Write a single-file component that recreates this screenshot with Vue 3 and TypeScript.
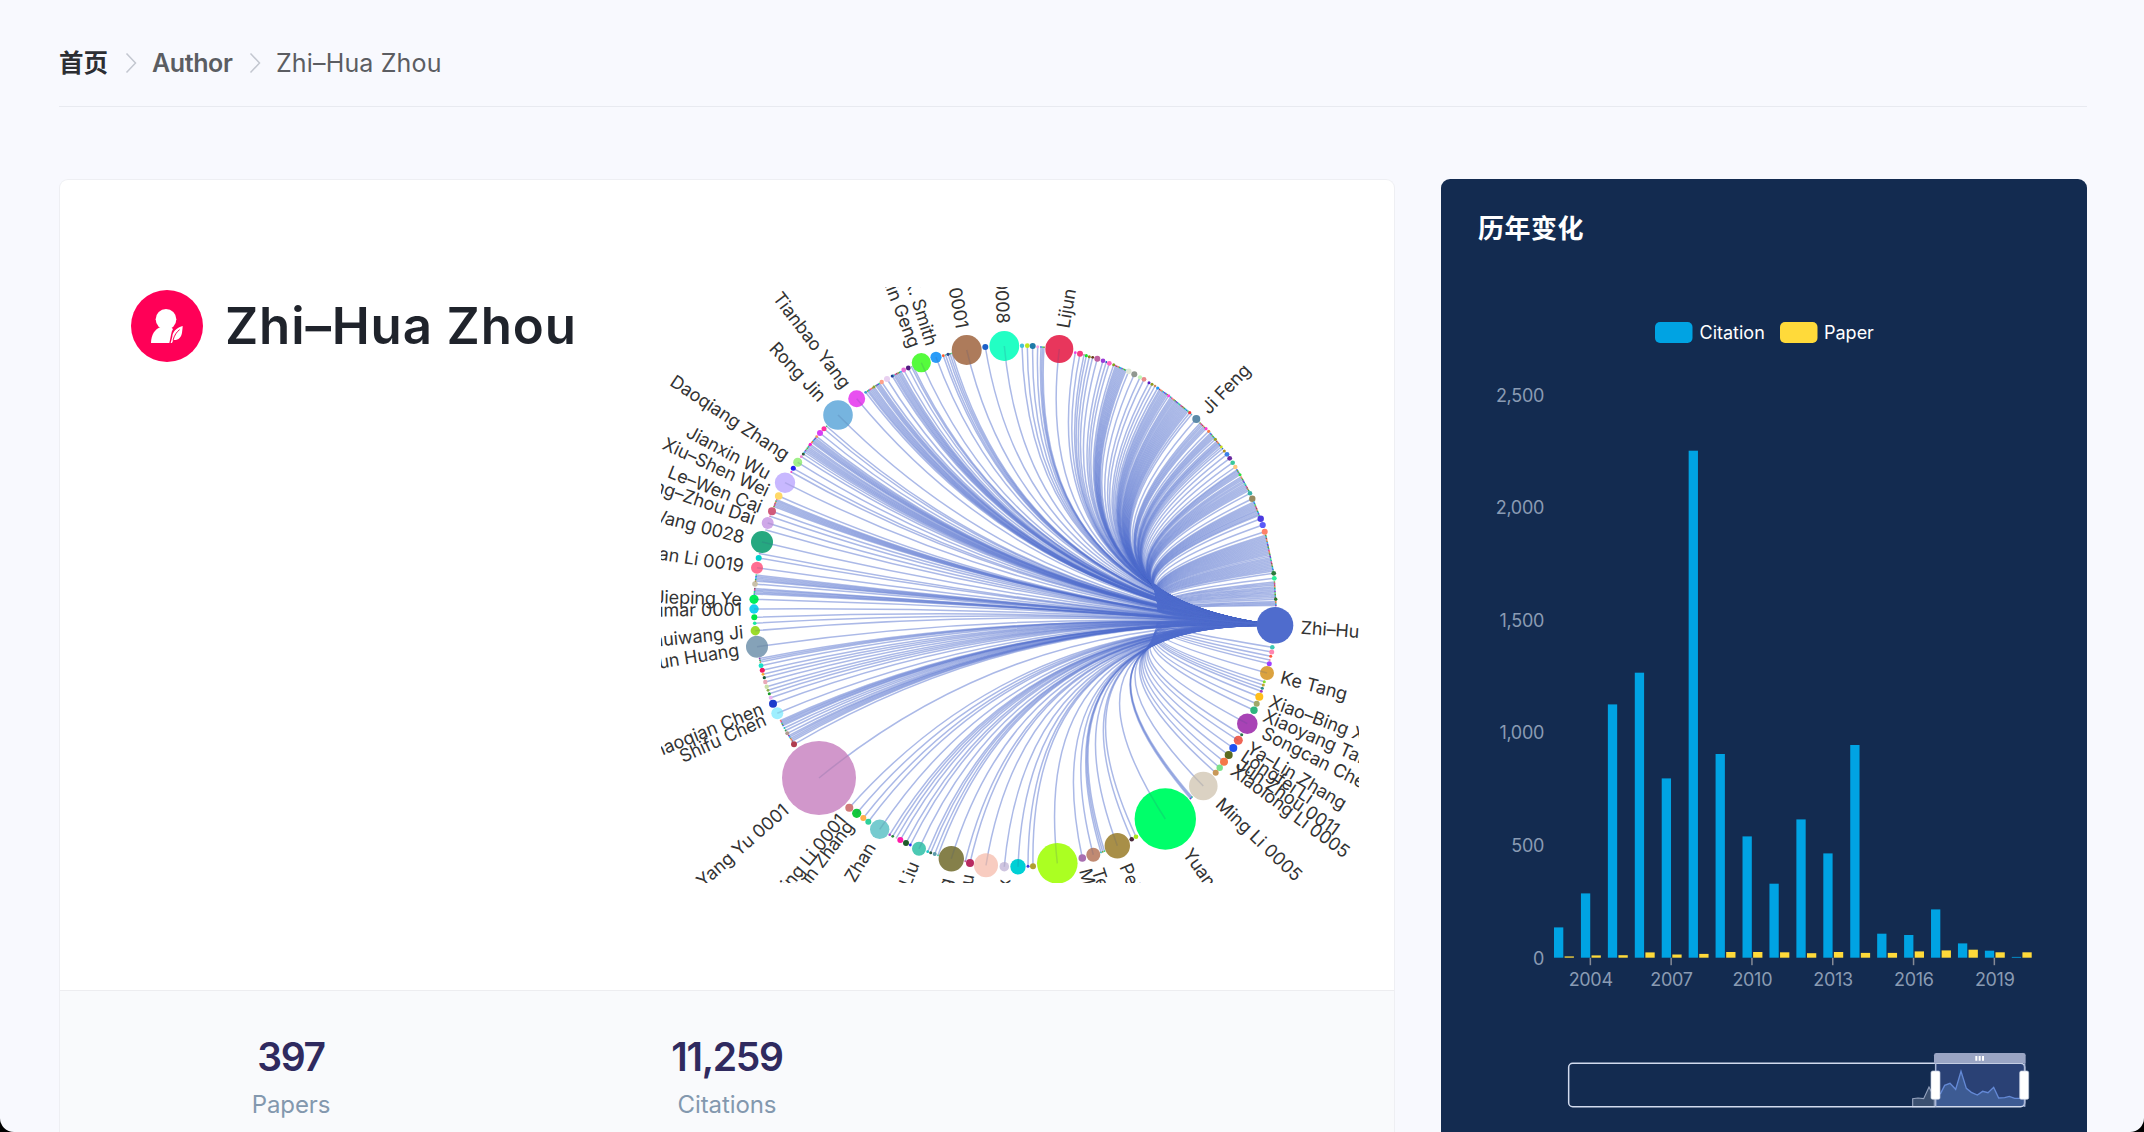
<script setup lang="ts">
type Node = { x: number; y: number; r: number; color: string; label?: string }
type Item = [number, number, number, string, string?] | [number, number, number, number]

const cx = 1014.7 - 661
const cy = 606 - 287
const HUB = '#4f6ccd'

// Going clockwise from the hub. Four plain numbers describe a run of tiny
// co-authors spread between two points of the ring.
const items: Item[] = [
  [1272.3, 647.3, 2.3, '#3dc8b4'], [1271.7, 652, 2.5, '#ff85b0'], [1270.7, 656.3, 1.5, '#ff5a3c'],
  [1269.8, 660, 0.9, '#f77fa8'], [1269.3, 663.7, 2.5, '#a040ff'],
  [1267, 673, 7, '#dba23f', 'Ke Tang'],
  [1264.3, 681.7, 1.5, '#80e030'], [1263.3, 685, 1.5, '#c0a830'], [1262.3, 688.3, 1.5, '#2b8a8a'],
  [1261.3, 691.3, 1.5, '#a03cc0'],
  [1259.3, 696.7, 4, '#ffbe1a', 'Xiao–Bing Xue'], [1256.7, 703.7, 3, '#a0a86a'],
  [1254, 710.3, 3.7, '#2fb57f', 'Xiaoyang Tan'],
  [1247.3, 723.7, 10.3, '#a843b5', 'Songcan Chen'], [1241.7, 734.7, 1.5, '#2a7a4a'],
  [1238.3, 740.3, 4.5, '#ef6455', 'Ya–Lin Zhang'], [1233.3, 748, 4, '#1f4ff0', 'Longfei Li'],
  [1228.7, 755, 4, '#5c6b20', 'Jun Zhou 0011'], [1224, 761.7, 4, '#f57848', 'Xiaolong Li 0005'],
  [1219.7, 767.7, 3.2, '#7be08a'], [1215.7, 772.7, 3, '#c89858'],
  [1203.3, 786, 14.3, '#dbd2c3', 'Ming Li 0005'],
  [1192, 797, 1190.4, 798.6],
  [1165.3, 819, 30.7, '#00ff6a', 'Yuan Jiang 0001'],
  [1136, 836.7, 2.3, '#a8e61a'], [1131.7, 839.3, 2.3, '#4a2a3a'],
  [1117.3, 845.7, 12.7, '#a88f48', 'Peilin Zhao'],
  [1104.5, 851.2, 1101, 852.4],
  [1093.3, 854.7, 7, '#c08a72', 'Teng Zhang'], [1082.3, 858, 3.8, '#a86fb0', 'Min–Ling Zhang'],
  [1057.3, 863.3, 20.3, '#abff22'], [1033, 866.3, 3, '#b0a030'], [1028, 866.3, 1.5, '#3a3ae0'],
  [1018, 866.7, 7.7, '#00d0d5', 'Feng Xu'], [1004.3, 866.7, 4.8, '#cfc5e0', 'Alex'],
  [986, 865.3, 12, '#f8ccc0'], [970, 863, 4, '#b82a60', 'Jianxin Liu'], [965.3, 861.3, 1, '#c060a0'],
  [951.3, 858.7, 12.7, '#85804a', 'Wei Wang'],
  [938, 855.3, 0.9, '#40d0a0'], [934.7, 854, 2, '#5a9aaa'], [930.7, 852.7, 1.5, '#2a5a3a'],
  [927.7, 851.7, 1.4, '#1ac8c8'], [919, 848.7, 7, '#4cc9b4', 'Xu–Ying Liu'],
  [910.3, 845, 1.4, '#2a2af0'], [906, 843, 3, '#1f5a2a'], [900.3, 840, 3, '#ff1aa8'],
  [896.3, 838, 0.8, '#c0e0b0'], [892.7, 836.3, 1.4, '#2a8a3a'], [889.7, 834.7, 1.3, '#a040c0'],
  [879.7, 829.3, 9.7, '#76cbcf', 'De–Chuan Zhan'], [868.3, 821.7, 3, '#2fd09a'],
  [863.3, 818, 3, '#ffb04a'], [856.7, 813.3, 4.6, '#12c83c', 'Lin Zhang'],
  [849.3, 807.7, 4, '#d07a7a', 'Ming Li 0001'],
  [819, 778, 37, '#d197cb', 'Yang Yu 0001'],
  [794, 744.3, 3, '#b03c50'], [792.3, 741, 788.8, 735.6], [787.3, 733.3, 2, '#b09a90'],
  [785.6, 730.5, 0.9, '#3a9a50'], [784.4, 728, 0.9, '#20c0c0'], [783, 725.5, 780.6, 720.5],
  [777.3, 713.3, 6, '#9eefff', 'Shifu Chen'], [773, 703.7, 4, '#1c3ccc', 'Zhaoqian Chen'],
  [770.7, 697.7, 2, '#e8b0f0'], [769.3, 693.7, 1.5, '#1a9a2a'], [768, 690.3, 1.4, '#88b048'],
  [766.7, 686.7, 2.2, '#c8e0a8'], [765.3, 682, 2.2, '#e8a8b8'], [764.3, 677.7, 1.6, '#1a5a3a'],
  [763, 674.3, 1.4, '#f8a830'], [762.3, 670.3, 2.5, '#f01a60'], [761, 665.7, 2.4, '#1ae0c8'],
  [760.3, 662, 759.6, 658.4],
  [757, 646.7, 11, '#85a2b8', 'Sheng–Jun Huang'], [755.3, 630.7, 4.7, '#9cdc2a', 'Shuiwang Ji'],
  [754.7, 623.3, 1.8, '#1ae8a0'], [754.3, 617.3, 3, '#00e64a'],
  [754, 609, 4.7, '#18d0f0', 'Vipin Kumar 0001'], [754, 599.3, 4.6, '#00ee5a', 'Jieping Ye'],
  [754.3, 594, 754.8, 588.5], [755, 584, 2.8, '#c8c0a8'], [755.5, 581, 756.2, 575],
  [757, 567.7, 6, '#ff6e92', 'Nan Li 0019'], [758.7, 558, 3, '#00d0cc'], [759.6, 553.6, 0.9, '#c090d0'],
  [762, 542, 11, '#26a880', 'Ke Wang 0028'], [766, 530, 0.9, '#c8c8e0'],
  [767.7, 523, 6, '#cfa8e8', 'Wang–Zhou Dai'], [770, 516.2, 0.8, '#f060c0'],
  [772, 511.3, 4, '#d05a7a', 'Le–Wen Cai'], [774, 506.5, 776, 501],
  [776.8, 499.8, 0.8, '#f040a0'],
  [778.7, 496, 3.8, '#ffd866', 'Xiu–Shen Wei'], [785, 482.7, 10.2, '#c8b8ff', 'Jianxin Wu'],
  [791.3, 472, 1, '#f040c0'], [793.3, 468.3, 2.5, '#2020f0'],
  [797.7, 462.3, 4.5, '#a0f088', 'Daoqiang Zhang'], [801.3, 456.7, 1.4, '#f080d0'],
  [803.3, 454, 1.5, '#2a5a3a'], [804.5, 452, 809.3, 445.5], [810.3, 444.3, 1.6, '#ff1ad0'],
  [811.8, 442.4, 815.4, 438.2], [816.7, 436.7, 1.4, '#f09060'], [820, 433, 3, '#d83ef4'],
  [824, 428.7, 2.5, '#ff30a0'], [826.5, 426.3, 0.8, '#40c060'],
  [838, 415, 14.8, '#76b4df', 'Rong Jin'], [856.7, 398.7, 8.5, '#e850f0', 'Tianbao Yang'],
  [865.7, 392.3, 1.4, '#40a0d0'], [867.6, 391, 872.6, 387.8], [874, 387, 1.4, '#90a030'],
  [876, 385.6, 879.5, 383.4], [881.7, 382, 2.2, '#ffa088'], [887, 379, 3, '#e8d0f0'],
  [892.3, 376, 1.6, '#1c3c98'], [894, 375, 901, 371.6], [903.7, 370, 2.4, '#e870d8'],
  [908.3, 368, 2.4, '#501a80'], [911.4, 366.6, 0.7, '#80d0a0'], [913, 366, 0.7, '#d0a0d0'],
  [921.3, 362.7, 9.6, '#55fb3c', 'Xin Geng'], [936, 357.3, 5.6, '#2a9cf8', 'K. Smith'],
  [943.3, 355.7, 1.4, '#ff5a2a'], [945.5, 355, 0.8, '#40c0a0'], [948, 354.3, 1.6, '#2a4a90'],
  [950, 353.8, 0.8, '#308030'], [952, 353.4, 0.8, '#40d080'],
  [966.7, 350, 15, '#ad7b5b', 'Wei Gao 0001'], [985.3, 347, 3, '#1c60c8'],
  [1004.3, 346, 14.9, '#22ffc4', 'Chao Qian 0008'],
  [1022, 345.7, 2.2, '#40c0d8'], [1027.3, 345.7, 2.4, '#c0e81a'], [1032.7, 346, 3, '#1f7aa8'],
  [1037.7, 346.7, 1.5, '#f8a0e0'], [1041, 346.9, 1044, 347.2],
  [1059.3, 349, 14, '#e8365c', 'Lijun Zhang'],
  [1075.3, 352.7, 1.4, '#f040e0'], [1080, 353.7, 3, '#f83a80'], [1084, 354.8, 0.8, '#b08080'],
  [1086.3, 355.7, 1.6, '#1ae02a'], [1089.3, 356.7, 1.5, '#8a8a1a'], [1092.7, 357.3, 1.4, '#6a3a1a'],
  [1097.3, 358.7, 3, '#c060a0'], [1103, 360.7, 2.3, '#9a3ad8'], [1106.3, 362, 0.9, '#2050c0'],
  [1109.3, 363.3, 2.4, '#ff60c0'], [1113.7, 364.7, 1.5, '#80a01a'],
  [1115.6, 365.7, 1126, 370.2], [1128.7, 371.3, 2.8, '#e0e8d8'], [1134.3, 374.3, 3, '#909890'],
  [1140, 377.3, 2.1, '#c0f8b8'], [1144, 379.3, 2.4, '#e88a8a'], [1149, 382.7, 1.5, '#5a1ac0'],
  [1152, 384.3, 1.5, '#8a9a1a'], [1155, 386, 1.3, '#d08a60'], [1157.7, 388, 1.6, '#1a9af8'],
  [1159.6, 389.3, 1167.2, 394.5], [1168.7, 395.7, 1.5, '#ff40e0'], [1170.6, 397.1, 1188, 411.2],
  [1189.7, 412.7, 1.6, '#f03a3a'], [1191.5, 414.4, 0.8, '#60b0c0'],
  [1196.3, 419, 4, '#5c8aa8', 'Ji Feng'],
  [1200.2, 423, 1204.8, 427.6], [1206, 428.7, 1.6, '#ff3ad0'], [1208.7, 431.3, 1.6, '#f87a4a'],
  [1210.4, 433.3, 1214, 437.6], [1215.3, 439.3, 1.6, '#98a020'], [1216.8, 441.3, 1220.2, 445.5],
  [1221.3, 447, 1.4, '#c8e01a'], [1222.6, 448.6, 0.8, '#3070d0'], [1224.3, 451, 1.5, '#b0901a'],
  [1227, 454.3, 2.4, '#3a80e8'], [1229.7, 458.3, 2.4, '#6a2aa0'], [1232.7, 462.7, 2.3, '#3ac89a'],
  [1235.3, 467, 2.2, '#ffc880'],
  [1237, 469.8, 1239.2, 473.3], [1240, 474.7, 1.5, '#2ae03a'], [1241.2, 477, 1248.7, 490.6],
  [1250, 493.3, 2.3, '#3ab0a8'], [1252.3, 498.7, 3.2, '#988a60'], [1254, 502, 1259.2, 515.3],
  [1260.7, 518.7, 3.2, '#4a3ae0'], [1262.7, 525, 3.1, '#5a5af8'], [1264.7, 531.7, 3, '#ff8068'],
  [1265.8, 535.3, 1273.3, 571], [1273.7, 573.3, 2.4, '#2a7a3a'], [1274.3, 578.3, 2.4, '#2af098'],
  [1274.5, 582, 1275.4, 597.5], [1275.7, 599.3, 1.7, '#2a7a2a'], [1275.8, 601.6, 1275.9, 605.6]
]

const tinyColors = ['#2fae60', '#e0409a', '#3a6ae0', '#b08a40', '#20b8b0', '#8a3ab8', '#ff7a50', '#7a9a30', '#1ab0f0', '#905060', '#40e080']

const nodes: Node[] = []
let tick = 0
for (const it of items) {
  if (typeof it[3] === 'number') {
    const [x1, y1, x2, y2] = it as [number, number, number, number]
    const n = Math.max(2, Math.round(Math.hypot(x2 - x1, y2 - y1) / 1.5) + 1)
    for (let i = 0; i < n; i++) {
      const t = i / (n - 1)
      const c = tinyColors[(tick * 7 + (tick % 3)) % tinyColors.length]
      nodes.push({ x: x1 + (x2 - x1) * t - 661, y: y1 + (y2 - y1) * t - 287, r: 0.85, color: c })
      tick++
    }
  } else {
    const [x, y, r, color, label] = it as [number, number, number, string, string?]
    nodes.push({ x: x - 661, y: y - 287, r, color, label })
  }
}
const hub: Node = { x: 1275 - 661, y: 625.3 - 287, r: 18.3, color: HUB, label: 'Zhi–Hua Zhou' }
const bigNodes = nodes.filter(n => n.r > 4.4)

const edge = (n: Node) => {
  const qx = cx * 0.9 + ((n.x + hub.x) / 2) * 0.1
  const qy = cy * 0.9 + ((n.y + hub.y) / 2) * 0.1
  return `M${hub.x} ${hub.y}Q${qx.toFixed(2)} ${qy.toFixed(2)} ${n.x.toFixed(2)} ${n.y.toFixed(2)}`
}

const labels = [...nodes, hub].filter(n => n.label).map(n => {
  const dx = n.x - cx
  const dy = n.y - cy
  const d = Math.hypot(dx, dy)
  const k = (d + n.r + 7.5) / d
  const left = dx < 0
  const a = (Math.atan2(dy, dx) * 180) / Math.PI + (left ? 180 : 0)
  return {
    text: n.label,
    anchor: left ? 'end' : 'start',
    transform: `translate(${cx + dx * k} ${cy + dy * k}) rotate(${a})`
  }
})

// Bar heights in px of the plot area, one entry per year from 2003 to 2020
const base = 957.7 - 300
const citation = [30.3, 64.3, 253.3, 285, 179.3, 507, 203.7, 121.3, 74, 138.3, 104.3, 212.7, 24, 22.7, 48.3, 14.3, 7, 0.8]
const paper = [1.3, 2.3, 2.5, 5.3, 3.2, 3.8, 5.7, 5.7, 5.4, 4.5, 5.7, 4.8, 4.8, 6.3, 7.3, 8, 5.4, 5.4]
const years = [2004, 2007, 2010, 2013, 2016, 2019]
const marks = ['0', '500', '1,000', '1,500', '2,000', '2,500']
const stats = [{ value: '397', name: 'Papers' }, { value: '11,259', name: 'Citations' }]
</script>

<template>
  <div class="page">
    <nav class="crumbs">
      <b class="home">首页</b>
      <svg class="sep" width="12" height="20" viewBox="0 0 12 20"><path d="M1.5 0.5L10.5 10L1.5 19.5" /></svg>
      <b class="author">Author</b>
      <svg class="sep" width="12" height="20" viewBox="0 0 12 20"><path d="M1.5 0.5L10.5 10L1.5 19.5" /></svg>
      <span class="who">Zhi–Hua Zhou</span>
    </nav>

    <main class="columns">
      <section class="profile">
        <div class="top">
          <header class="name">
            <svg width="72" height="72" viewBox="33 30 216 216">
              <circle cx="141" cy="138" r="108" fill="#ff0057" />
              <circle cx="138" cy="118" r="31" fill="#fff" />
              <path d="M93 189C94 165 104 146 124 141L152 141L159 147C153 156 153 170 148 189Z" fill="#fff" />
              <path d="M188 138C169 143 157 157 157 170L152 189H156L160 180C174 182 184 172 186 158C187 150 188 144 188 138Z" fill="#fff" />
              <path d="M179 149C170 155 163 166 159 181" fill="none" stroke="#ff0057" stroke-width="3" />
            </svg>
            <h1>Zhi–Hua Zhou</h1>
          </header>
          <svg class="graph" width="698" height="596" viewBox="0 0 698 596">
            <defs>
              <clipPath id="discs">
                <circle v-for="(n, i) in bigNodes" :key="i" :cx="n.x" :cy="n.y" :r="n.r" />
              </clipPath>
            </defs>
            <g fill="none" :stroke="HUB" stroke-width="1.5" stroke-opacity="0.48">
              <path v-for="(n, i) in nodes" :key="i" :d="edge(n)" />
            </g>
            <circle v-for="(n, i) in nodes" :key="i" :cx="n.x" :cy="n.y" :r="n.r" :fill="n.color" />
            <g clip-path="url(#discs)" fill="none" stroke="#3a4a80" stroke-width="1.5" stroke-opacity="0.16">
              <path v-for="(n, i) in bigNodes" :key="i" :d="edge(n)" />
            </g>
            <circle :cx="hub.x" :cy="hub.y" :r="hub.r" :fill="HUB" />
            <text v-for="(l, i) in labels" :key="i" :transform="l.transform" :text-anchor="l.anchor" dy="0.36em">{{ l.text }}</text>
          </svg>
        </div>
        <footer class="stats">
          <div v-for="s in stats" :key="s.name" class="stat">
            <strong>{{ s.value }}</strong>
            <span>{{ s.name }}</span>
          </div>
        </footer>
      </section>

      <aside class="trend">
        <h2>历年变化</h2>
        <svg class="chart" width="646" height="832" viewBox="1441 0 646 832">
          <rect x="1655" y="22" width="37.5" height="21" rx="5" fill="#00a3e3" />
          <text class="legend" x="1699.5" y="39">Citation</text>
          <rect x="1780" y="22" width="37.5" height="21" rx="5" fill="#ffda3a" />
          <text class="legend" x="1824" y="39">Paper</text>

          <text v-for="(m, i) in marks" :key="m" class="axis" x="1544" :y="base + 6.8 - i * 112.55" text-anchor="end">{{ m }}</text>
          <g v-for="(y, i) in years" :key="y">
            <rect :x="1589.6 + i * 80.8" :y="base" width="1.5" height="7.5" fill="#858a96" />
            <text class="axis" :x="1590.7 + i * 80.8" y="685.8" text-anchor="middle">{{ y }}</text>
          </g>
          <rect v-for="(h, i) in citation" :key="'c' + i" :x="1554 + i * 26.93" :y="base - h" width="9.3" :height="h" fill="#00a3e3" />
          <rect v-for="(h, i) in paper" :key="'p' + i" :x="1564.6 + i * 26.93" :y="base - h" width="9.3" :height="h" fill="#ffda3a" />

          <g transform="translate(1540 710) scale(0.33333)">
            <path d="M1118 290V266L1134 264L1151 266L1167 231L1183 262V290Z" fill="#3b5070" stroke="#94a2bd" stroke-width="3.5" />
            <rect x="1187" y="160" width="267" height="130" fill="#2a4175" />
            <path d="M1187 290V262L1202 250L1214 226L1230 220L1247 238L1263 184L1279 235L1294 247L1312 255L1328 244L1344 248L1361 232L1376 264L1394 263L1408 259L1424 265H1454V290Z" fill="#3d5b93" />
            <path d="M1187 262L1202 250L1214 226L1230 220L1247 238L1263 184L1279 235L1294 247L1312 255L1328 244L1344 248L1361 232L1376 264L1394 263L1408 259L1424 265H1454" fill="none" stroke="#6489d6" stroke-width="4" />
            <rect x="86" y="160" width="1368" height="130" rx="12" fill="none" stroke="#d2dbee" stroke-width="4.5" />
            <path d="M1187 160V290M1454 160V290" stroke="#abb8d8" stroke-width="4.5" />
            <path d="M1182 160V136Q1182 129 1189 129H1450Q1457 129 1457 136V160Z" fill="#9aa5c4" />
            <path d="M1309 138V152M1319 138V152M1329 138V152" stroke="#fff" stroke-width="6" />
            <rect x="1173" y="183" width="27" height="85" rx="5" fill="#fff" stroke="#c3cce0" stroke-width="2" />
            <rect x="1439" y="183" width="27" height="85" rx="5" fill="#fff" stroke="#c3cce0" stroke-width="2" />
          </g>
        </svg>
      </aside>
    </main>
  </div>
</template>

<style>
html,
body {
  margin: 0;
  background: #000;
}
</style>

<style scoped>
.page {
  box-sizing: border-box;
  width: 2144px;
  height: 1132px;
  padding: 0 57px 0 59px;
  overflow: hidden;
  display: flex;
  flex-direction: column;
  background: #f8f9fe;
  border-radius: 0 0 14px 14px;
  font-family: Inter, 'Noto Sans CJK SC', sans-serif;
}
.crumbs {
  box-sizing: border-box;
  flex: none;
  height: 107px;
  padding-top: 19px;
  display: flex;
  align-items: center;
  border-bottom: 1.5px solid #e8eaf0;
  font-size: 25px;
  color: #5b5d62;
}
.home {
  width: 50px;
  margin-top: -3px;
  white-space: nowrap;
  font-size: 24.5px;
  color: #2c2e33;
}
.author {
  width: 81px;
  font-weight: 600;
  letter-spacing: -0.4px;
}
.who {
  letter-spacing: 0.15px;
}
.sep {
  margin: 0 15.5px;
  fill: none;
  stroke: #c3c7d0;
  stroke-width: 1.5;
}
.columns {
  flex: 1;
  min-height: 0;
  margin-top: 72px;
  display: flex;
  gap: 46px;
}
.profile {
  box-sizing: border-box;
  width: 1336px;
  border: 1.5px solid #eeeff3;
  border-bottom: 0;
  border-radius: 9px 9px 0 0;
  overflow: hidden;
  display: flex;
  flex-direction: column;
  background: #fff;
}
.top {
  flex: none;
  height: 810px;
  display: flex;
}
.name {
  width: 530px;
  height: 72px;
  flex: none;
  margin: 110px 0 0 71px;
  display: flex;
  align-items: center;
  gap: 22px;
}
h1 {
  margin: -2px 0 0;
  font-size: 51px;
  font-weight: 600;
  letter-spacing: 0.85px;
  color: #1f232b;
  white-space: nowrap;
}
.graph {
  flex: none;
  margin-top: 107px;
}
.graph text {
  font-size: 18px;
  letter-spacing: -0.1px;
  fill: #333;
}
.stats {
  flex: 1;
  padding-left: 13px;
  display: flex;
  background: #f9fafc;
  border-top: 1.5px solid #ededf0;
}
.stat {
  width: 436px;
  padding-top: 42px;
  display: flex;
  flex-direction: column;
  align-items: center;
}
.stat strong {
  font-size: 39px;
  line-height: 48px;
  font-weight: 600;
  letter-spacing: -1.3px;
  color: #2f2a5f;
}
.stat span {
  font-size: 24px;
  line-height: 30px;
  margin-top: 9px;
  letter-spacing: -0.1px;
  color: #8398ae;
}
.trend {
  width: 646px;
  border-radius: 9px 9px 0 0;
  overflow: hidden;
  background: #132b50;
}
h2 {
  margin: 0;
  height: 121px;
  padding: 31px 0 0 37px;
  box-sizing: border-box;
  font-size: 26px;
  line-height: 38px;
  font-weight: 600;
  letter-spacing: 0.5px;
  color: #fff;
}
.chart {
  display: block;
}
.chart .legend {
  font-size: 18px;
  fill: #fff;
}
.chart .axis {
  font-size: 18px;
  letter-spacing: -0.3px;
  fill: #8a9bb3;
}
</style>
